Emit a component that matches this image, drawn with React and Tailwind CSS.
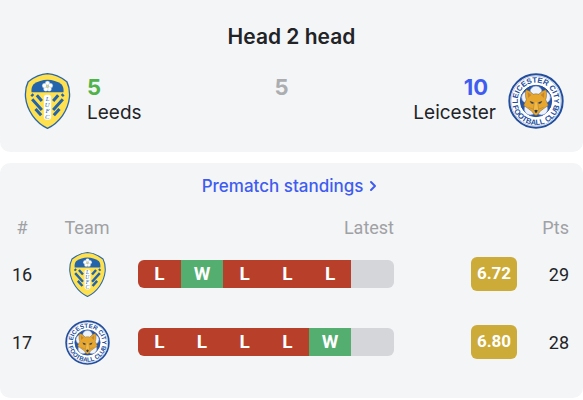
import React, { useId } from 'react';
import { ChevronRight } from 'lucide-react';

const standings = [
  { position: 16, team: 'Leeds', form: ['L', 'W', 'L', 'L', 'L', ''], rating: '6.72', points: 29 },
  { position: 17, team: 'Leicester', form: ['L', 'L', 'L', 'L', 'W', ''], rating: '6.80', points: 28 },
];

const formColors = {
  W: 'bg-[#53ae70]',
  L: 'bg-[#b8402a]',
  '': 'bg-[#d4d6da]',
};

function LeedsCrest({ className }) {
  return (
    <svg viewBox="0 0 136 168" className={className} role="img" aria-label="Leeds">
      <path
        d="M68 2C86 3 108 12 126 26C134 42 135 57 134 72C130 112 104 149 68 166C32 149 6 112 2 72C1 57 2 42 10 26C28 12 50 3 68 2Z"
        fill="#ffe14f"
        stroke="#2b67a9"
        strokeWidth="4"
      />
      <path d="M20 58C19 48 21 40 26 34C51 16 85 16 110 34C115 40 117 48 116 58Z" fill="#2364aa" />
      <g stroke="#2364aa" strokeWidth="9">
        <path d="M20 64L25 69M36 67L51 84M22 79L51 111M32 108L49 127" />
        <path d="M116 64L111 69M100 67L85 84M114 79L85 111M104 108L87 127" />
      </g>
      <rect x="57" y="65" width="22" height="75" rx="8" fill="#fff" />
      <g
        fill="#2364aa"
        fontFamily="Liberation Serif, serif"
        fontSize="20"
        fontStyle="italic"
        textAnchor="middle"
      >
        <text x="68" y="83">L</text>
        <text x="67" y="101">U</text>
        <text x="68" y="119">F</text>
        <text x="67" y="137">C</text>
      </g>
      <g fill="#fff" stroke="#8eaccd" strokeWidth="1">
        <circle cx="68" cy="31" r="7" />
        <circle cx="77" cy="38" r="7" />
        <circle cx="73" cy="48" r="7" />
        <circle cx="63" cy="48" r="7" />
        <circle cx="59" cy="38" r="7" />
      </g>
      <circle cx="68" cy="40" r="4" fill="#d9d777" stroke="#8eaccd" />
    </svg>
  );
}

function LeicesterCrest({ className }) {
  const topId = useId();
  const bottomId = useId();

  return (
    <svg viewBox="0 0 168 168" className={className} role="img" aria-label="Leicester">
      <defs>
        <path id={topId} d="M84 139A55 55 0 0 1 84 29A55 55 0 0 1 84 139" />
        <path id={bottomId} d="M84 12A72 72 0 0 0 84 156A72 72 0 0 0 84 12" />
      </defs>
      <circle cx="84" cy="84" r="80" fill="#fff" stroke="#234e9d" strokeWidth="6" />
      <circle cx="84" cy="84" r="75" fill="none" stroke="#7893c5" strokeWidth="1.5" />
      <g
        fill="#234e9d"
        fontFamily="Liberation Sans, sans-serif"
        fontWeight="700"
        fontSize="23"
        textAnchor="middle"
      >
        <text>
          <textPath href={`#${topId}`} startOffset="50%">LEICESTER CITY</textPath>
        </text>
        <text>
          <textPath href={`#${bottomId}`} startOffset="50%">FOOTBALL CLUB</textPath>
        </text>
      </g>
      <circle cx="84" cy="84" r="47" fill="#2854a1" stroke="#234e9d" strokeWidth="3" />
      <g fill="#edf2fb" stroke="#8ba5d0" strokeWidth="2">
        <circle cx="84" cy="57" r="18" />
        <circle cx="109" cy="73" r="18" />
        <circle cx="101" cy="108" r="18" />
        <circle cx="67" cy="108" r="18" />
        <circle cx="59" cy="73" r="18" />
      </g>
      <path
        d="M54 50C63 52 70 58 75 64C81 62 87 62 93 64C98 58 105 52 114 50C117 62 116 72 113 80L121 97L107 107L95 116C92 124 87 127 84 127C81 127 76 124 73 116L61 107L47 97L55 80C52 72 51 62 54 50Z"
        fill="#e7a72f"
        stroke="#77633c"
        strokeWidth="1.5"
      />
      <path d="M59 57L70 66L60 75ZM109 57L98 66L108 75Z" fill="#c9872d" />
      <path d="M65 84L77 88L76 93L69 91ZM103 84L91 88L92 93L99 91Z" fill="#38445b" />
      <path d="M61 103L75 108M107 103L93 108" fill="none" stroke="#b88732" strokeWidth="2" />
      <path d="M79 88L76 111L84 118L92 111L89 88" fill="#f3b944" stroke="#a37a32" strokeWidth="1.5" />
      <path d="M79 112Q84 109 89 112L86 119H82Z" fill="#2b3b58" />
    </svg>
  );
}

const crests = {
  Leeds: LeedsCrest,
  Leicester: LeicesterCrest,
};

function HeadToHead() {
  return (
    <section className="rounded-b-[10px] bg-[#f4f5f7] pt-[21px] pb-[23px]">
      <h2 className="text-center text-[21px] leading-8 font-semibold">Head 2 head</h2>
      <div className="mt-5 flex items-start justify-between pr-[19px] pl-6">
        <div className="flex gap-4">
          <LeedsCrest className="h-14 w-[47px]" />
          <div>
            <p className="text-[22px] leading-7 font-bold text-[#50b34a]">5</p>
            <p className="text-[19px] leading-6">Leeds</p>
          </div>
        </div>
        <p className="pl-2 text-[22px] leading-7 font-bold text-[#abadb0]">5</p>
        <div className="flex gap-3">
          <div className="text-right">
            <p className="pr-2 text-[22px] leading-7 font-bold text-[#3f5cf0]">10</p>
            <p className="text-[19px] leading-6">Leicester</p>
          </div>
          <LeicesterCrest className="size-14" />
        </div>
      </div>
    </section>
  );
}

function FormBar({ form }) {
  return (
    <div className="flex h-7 overflow-hidden rounded-md">
      {form.map((result, index) => (
        <span
          key={index}
          className={`flex flex-1 items-center justify-center text-[19px] font-bold text-white ${formColors[result]}`}
        >
          {result}
        </span>
      ))}
    </div>
  );
}

function Standings() {
  return (
    <section className="rounded-[10px] bg-[#f4f5f7] pt-[7px] pb-[22px]">
      <div className="flex justify-center">
        <a href="#standings" className="flex items-center gap-0.5 text-[17px] leading-8 font-medium text-[#3f5cf0]">
          Prematch standings
          <ChevronRight className="size-4" strokeWidth={3} />
        </a>
      </div>
      <table className="mt-[14px] w-full table-fixed font-[Roboto,sans-serif] text-[18px]">
        <thead className="leading-6 text-[#a0a1a4]">
          <tr>
            <th className="w-11 font-normal">#</th>
            <th className="w-[86px] font-normal">Team</th>
            <th className="text-right font-normal">Latest</th>
            <th className="w-[138px]" aria-label="Rating" />
            <th className="w-[51px] pr-[14px] text-right font-normal">Pts</th>
          </tr>
        </thead>
        <tbody>
          {standings.map(({ position, team, form, rating, points }) => {
            const Crest = crests[team];
            return (
              <tr key={team} className="h-[68px]">
                <td className="text-center">{position}</td>
                <td>
                  <Crest className="mx-auto size-[45px]" />
                </td>
                <td className="pl-2">
                  <FormBar form={form} />
                </td>
                <td className="pr-[15px]">
                  <span className="ml-auto flex h-[34px] w-[46px] items-center justify-center rounded-md bg-[#ccab38] text-[17px] font-bold text-white">
                    {rating}
                  </span>
                </td>
                <td className="pr-[14px] text-right">{points}</td>
              </tr>
            );
          })}
        </tbody>
      </table>
    </section>
  );
}

export default function App() {
  return (
    <main className="flex flex-col gap-[11px] bg-white font-[Inter,sans-serif] text-[#222326]">
      <HeadToHead />
      <Standings />
    </main>
  );
}
